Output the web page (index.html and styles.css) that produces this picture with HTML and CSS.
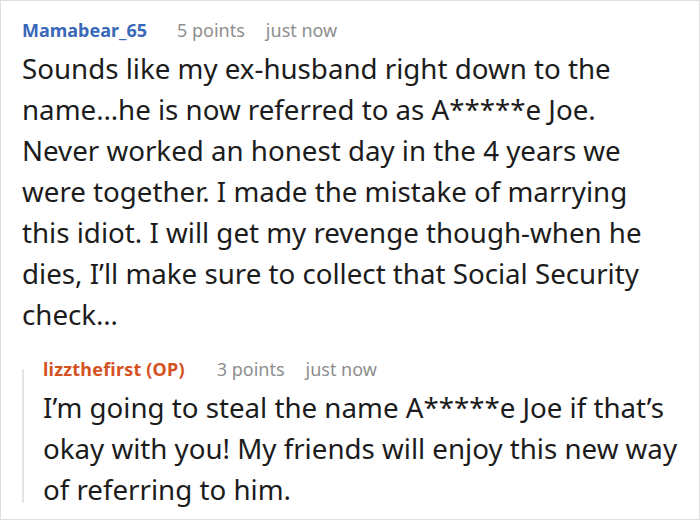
FILE: index.html
```html
<!DOCTYPE html>
<html>
<head>
<meta charset="utf-8">
<link rel="stylesheet" href="styles.css">
</head>
<body>
<div class="frame">
  <div class="comment">
    <div class="meta">
      <span class="author author-blue">Mamabear_65</span>
      <span class="points">5 points</span>
      <span class="time">just now</span>
    </div>
    <p class="text">Sounds like my ex-husband right down to the name…he is now referred to as A*****e Joe. Never worked an honest day in the 4 years we were together. I made the mistake of marrying this idiot. I will get my revenge though-when he dies, I’ll make sure to collect that Social Security check…</p>
  </div>
  <div class="reply">
    <div class="meta">
      <span class="author author-op">lizzthefirst (OP)</span>
      <span class="points">3 points</span>
      <span class="time">just now</span>
    </div>
    <p class="text">I’m going to steal the name A*****e Joe if that’s okay with you! My friends will enjoy this new way of referring to him.</p>
  </div>
</div>
</body>
</html>
```
FILE: styles.css
```css
html, body {
  margin: 0;
  padding: 0;
  background: #fff;
}
.frame {
  width: 700px;
  height: 520px;
  box-sizing: border-box;
  border: 1px solid #dedede;
  padding: 17px 24px 0 21px;
  font-family: "Noto Sans", "Open Sans", sans-serif;
  color: #1c1c1c;
  overflow: hidden;
}
.meta {
  display: flex;
  align-items: baseline;
  font-size: 18px;
  line-height: 24px;
}
.author {
  font-weight: 700;
  margin-right: 30px;
}
.author-blue { color: #3a68b8; }
.author-op {
  color: #d4521f;
  letter-spacing: 0.2px;
  margin-right: 32px;
}
.points {
  color: #8e8e8e;
  margin-right: 21px;
}
.time { color: #8e8e8e; }
.text {
  margin: 6px 0 0;
  font-size: 27.7px;
  line-height: 41px;
}
.reply {
  position: relative;
  margin-top: 22px;
  margin-right: -8px;
  padding-left: 21px;
}
.reply::before {
  content: "";
  position: absolute;
  left: 0;
  top: 12px;
  height: 134px;
  width: 2px;
  background: #e4e4e4;
}
```
